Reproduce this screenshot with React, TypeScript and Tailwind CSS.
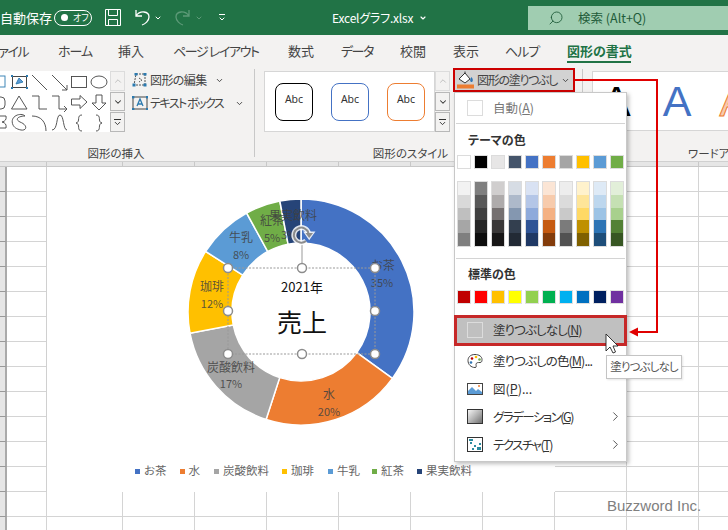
import { ChevronDown, ChevronRight, ChevronUp, Search } from "lucide-react";

const tabs = [
  { label: "ファイル", w: "w-[39px]", ml: "ml-[-11px]", track: "tracking-[-1.5px]" },
  { label: "ホーム", w: "w-[32px]", ml: "ml-[30px]", track: "tracking-[-1px]" },
  { label: "挿入", w: "w-[26px]", ml: "ml-[28px]", track: "" },
  { label: "ページ レイアウト", w: "w-[85px]", ml: "ml-[29px]", track: "tracking-[-1.4px]" },
  { label: "数式", w: "w-[26px]", ml: "ml-[30px]", track: "" },
  { label: "データ", w: "w-[32px]", ml: "ml-[27px]", track: "tracking-[-1.5px]" },
  { label: "校閲", w: "w-[26px]", ml: "ml-[27px]", track: "" },
  { label: "表示", w: "w-[26px]", ml: "ml-[27px]", track: "" },
  { label: "ヘルプ", w: "w-[34px]", ml: "ml-[26px]", track: "tracking-[-1px]" },
];

const themeTop = [
  "bg-[#ffffff]", "bg-[#000000]", "bg-[#e7e6e6]", "bg-[#44546a]", "bg-[#4472c4]",
  "bg-[#ed7d31]", "bg-[#a5a5a5]", "bg-[#ffc000]", "bg-[#5b9bd5]", "bg-[#70ad47]",
];

const themeShades = [
  ["bg-[#f2f2f2]", "bg-[#d9d9d9]", "bg-[#bfbfbf]", "bg-[#a6a6a6]", "bg-[#7f7f7f]"],
  ["bg-[#7f7f7f]", "bg-[#595959]", "bg-[#404040]", "bg-[#262626]", "bg-[#0d0d0d]"],
  ["bg-[#d0cece]", "bg-[#aeabab]", "bg-[#757070]", "bg-[#3a3838]", "bg-[#171616]"],
  ["bg-[#d6dce4]", "bg-[#adb9ca]", "bg-[#8497b0]", "bg-[#333f4f]", "bg-[#222a35]"],
  ["bg-[#d9e2f3]", "bg-[#b4c6e7]", "bg-[#8eaadb]", "bg-[#2f5496]", "bg-[#1f3864]"],
  ["bg-[#fbe5d5]", "bg-[#f7cbac]", "bg-[#f4b183]", "bg-[#c55a11]", "bg-[#833c0b]"],
  ["bg-[#ededed]", "bg-[#dbdbdb]", "bg-[#c9c9c9]", "bg-[#7b7b7b]", "bg-[#525252]"],
  ["bg-[#fff2cc]", "bg-[#fee599]", "bg-[#ffd965]", "bg-[#bf9000]", "bg-[#7f6000]"],
  ["bg-[#deeaf6]", "bg-[#bdd7ee]", "bg-[#9cc3e5]", "bg-[#2e75b5]", "bg-[#1e4e79]"],
  ["bg-[#e2efd9]", "bg-[#c5e0b3]", "bg-[#a8d08d]", "bg-[#538135]", "bg-[#375623]"],
];

const standard = [
  "bg-[#c00000]", "bg-[#ff0000]", "bg-[#ffc000]", "bg-[#ffff00]", "bg-[#92d050]",
  "bg-[#00b050]", "bg-[#00b0f0]", "bg-[#0070c0]", "bg-[#002060]", "bg-[#7030a0]",
];

const slices = [
  { name: "お茶", pct: 35, color: "#4472c4", dot: "bg-[#4472c4]", gap: "", lx: 383, ly: 264, px: 382, py: 282 },
  { name: "水", pct: 20, color: "#ed7d31", dot: "bg-[#ed7d31]", gap: "ml-[13px]", lx: 329, ly: 393, px: 329, py: 411 },
  { name: "炭酸飲料", pct: 17, color: "#a5a5a5", dot: "bg-[#a5a5a5]", gap: "ml-[14px]", lx: 231, ly: 366, px: 231, py: 383 },
  { name: "珈琲", pct: 12, color: "#ffc000", dot: "bg-[#ffc000]", gap: "ml-[13px]", lx: 212, ly: 285, px: 212, py: 303 },
  { name: "牛乳", pct: 8, color: "#5b9bd5", dot: "bg-[#5b9bd5]", gap: "ml-[14px]", lx: 241, ly: 236, px: 241, py: 254 },
  { name: "紅茶", pct: 5, color: "#70ad47", dot: "bg-[#70ad47]", gap: "ml-[12px]", lx: 272, ly: 219, px: 272, py: 237 },
  { name: "果実飲料", pct: 3, color: "#264478", dot: "bg-[#264478]", gap: "ml-[13px]", lx: 293, ly: 214, px: 289, py: 234 },
];

const CX = 301;
const CY = 312;

function slicePath(from: number, to: number) {
  const R = 113;
  const r = 69;
  const pt = (rad: number, pct: number) => {
    const a = (pct / 100) * Math.PI * 2;
    return `${(CX + rad * Math.sin(a)).toFixed(2)} ${(CY - rad * Math.cos(a)).toFixed(2)}`;
  };
  const large = to - from > 50 ? 1 : 0;
  return `M${pt(R, from)} A${R} ${R} 0 ${large} 1 ${pt(R, to)} L${pt(r, to)} A${r} ${r} 0 ${large} 0 ${pt(r, from)} Z`;
}

function Donut() {
  let acc = 0;
  const handles = [
    [228, 268], [302, 268], [375, 268],
    [228, 311], [375, 311],
    [228, 354], [302, 354], [375, 354],
  ];
  return (
    <svg width="508" height="295" viewBox="47 167 508 295" className="block">
      {slices.map((s) => {
        const d = slicePath(acc, acc + s.pct);
        acc += s.pct;
        return <path key={s.name} d={d} fill={s.color} stroke="#fff" strokeWidth="1.5" />;
      })}
      {slices.map((s) => (
        <g key={s.name} fill="#404040" fillOpacity="0.85" textAnchor="middle" dominantBaseline="central">
          <text x={s.lx} y={s.ly} fontSize="12">{s.name}</text>
          <text x={s.px} y={s.py} fontSize="11">{s.pct}%</text>
        </g>
      ))}
      <text x="302" y="286" fontSize="13" fill="#111" textAnchor="middle" dominantBaseline="central">2021年</text>
      <text x="302" y="321" fontSize="25" fill="#111" textAnchor="middle" dominantBaseline="central">売上</text>
      <rect x="228" y="268" width="147" height="86" fill="none" stroke="#999" strokeDasharray="2 1.5" />
      <line x1="302" y1="243" x2="302" y2="268" stroke="#999" />
      {handles.map(([x, y]) => (
        <circle key={`${x}-${y}`} cx={x} cy={y} r="4.5" fill="#fff" stroke="#8c8c8c" strokeWidth="1.5" />
      ))}
      <path d="M306 241 A7.5 7.5 0 1 1 308.5 233" stroke="#fff" strokeWidth="5" fill="none" opacity="0.85" />
      <path d="M305 232.5 H313.5 L309.2 238.5 Z" fill="#fff" stroke="#fff" strokeWidth="2" opacity="0.85" />
      <path d="M306 241 A7.5 7.5 0 1 1 308.5 233" stroke="#8c8c8c" strokeWidth="2" fill="none" />
      <path d="M305.5 233 H313 L309.2 238 Z" fill="#8c8c8c" />
    </svg>
  );
}

function ShapesGallery() {
  return (
    <svg width="110" height="61" viewBox="0 71 110 61" fill="none" stroke="#444" strokeWidth="0.9" className="block">
      <rect x="-8" y="76" width="13" height="11" stroke="#2b7ab0" />
      <rect x="12.5" y="76.5" width="14" height="11" stroke="#333" />
      <path d="M16 84 L19 78 L23 82 Z" fill="#5b9bd5" stroke="#2b7ab0" />
      {[[12, 76], [27, 76], [12, 88], [27, 88]].map(([x, y]) => (
        <rect key={`${x}${y}`} x={x - 1} y={y - 1} width="2" height="2" fill="#2b7ab0" stroke="none" />
      ))}
      <path d="M32 75 L47 90" />
      <path d="M52 75 L67 90 M67 85 V90 H62" />
      <rect x="71.5" y="76.5" width="15" height="11" />
      <ellipse cx="99" cy="82" rx="8" ry="6" />
      <rect x="-8" y="97" width="13" height="12" rx="4" />
      <path d="M19 96 L27 109 H11.5 Z" />
      <path d="M32 96 H39 V109 H47" />
      <path d="M52 96 H59 V109 H66 M64 106 L67 109 L64 112" />
      <path d="M71.5 99 H80 V95.5 L87 102 L80 108.5 V105 H71.5 Z" />
      <path d="M96 95 H102 V103 H106 L99 110 L92 103 H96 Z" />
      <path d="M-2 116 H6 Q7 121 2 122 Q7 123 6 128 H-2" />
      <path d="M13 125 C 9 116 21 112 25 116 C 19 116 14 119 20 122 C 28 125 27 131 21 130 C 16 129 14 127 13 125 Z" />
      <path d="M32 116 C 41 116 46 122 46 131" />
      <path d="M52 130 C 58 130 56 115 60 115 C 64 115 63 130 67 130" />
      <path d="M82 115 C 76 115 81 122 76 123 C 81 124 76 131 82 131" />
      <path d="M96 115 C 102 115 97 122 102 123 C 97 124 102 131 96 131" />
    </svg>
  );
}

function ScrollColumn() {
  return (
    <div className="flex w-[15px] flex-col gap-px">
      <div className="flex h-[20px] items-center justify-center border border-[#dcdcdc] bg-[#f3f2f1] text-[#b5b5b5]">
        <ChevronUp size={10} />
      </div>
      <div className="flex h-[19px] items-center justify-center border border-[#b8b8b8] bg-[#f3f2f1] text-[#333]">
        <ChevronDown size={10} strokeWidth={2.5} />
      </div>
      <div className="flex h-[20px] flex-col items-center justify-center border border-[#b8b8b8] bg-[#f3f2f1]">
        <div className="mb-px h-px w-[7px] bg-[#333]" />
        <ChevronDown size={9} strokeWidth={2.5} className="-my-[2px] text-[#333]" />
      </div>
    </div>
  );
}

function EditShapeIcon() {
  return (
    <svg width="16" height="14" viewBox="0 0 16 14" fill="none" className="shrink-0">
      <path d="M4 1 H13 V12 H2 Z M7 5 L10 7 L7 9" stroke="#555" strokeDasharray="2 1" />
      {[[4, 1], [13, 1], [13, 12], [2, 12]].map(([x, y]) => (
        <rect key={`${x}${y}`} x={x - 1.5} y={y - 1.5} width="3" height="3" fill="#2b7ab0" />
      ))}
    </svg>
  );
}

function TextBoxIcon() {
  return (
    <svg width="16" height="14" viewBox="0 0 16 14" fill="none" className="shrink-0">
      <rect x="1" y="1" width="14" height="12" stroke="#444" />
      <path d="M5 10 L8 3 L11 10 M6 8 H10" stroke="#2b7ab0" strokeWidth="1.3" />
      {[[1, 1], [15, 1], [1, 13], [15, 13]].map(([x, y]) => (
        <rect key={`${x}${y}`} x={x - 1} y={y - 1} width="2.4" height="2.4" fill="#2b7ab0" />
      ))}
    </svg>
  );
}

function AbcButton({ border }: { border: string }) {
  return (
    <div className={`flex h-[38px] w-[38px] items-center justify-center rounded-lg border bg-white pb-1 [font-family:'Noto_Sans',sans-serif] text-[10.5px] text-[#333] ${border}`}>
      Abc
    </div>
  );
}

function TitleBar() {
  return (
    <div className="flex h-[35px] items-center bg-[#217346] text-[13px] text-white">
      <span className="w-[47px] whitespace-nowrap">自動保存</span>
      <div className="ml-[7px] flex h-[16px] w-[38px] items-center rounded-full border border-white pl-[6px]">
        <div className="h-[7px] w-[7px] rounded-full bg-white" />
        <span className="ml-[5px] text-[9px] leading-none">オフ</span>
      </div>
      <svg width="16" height="17" viewBox="0 0 16 17" fill="none" stroke="#fff" className="ml-[13px]">
        <path d="M0.5 0.5 H15.5 V16.5 H0.5 Z M3.5 0.5 V6.5 H12.5 V0.5 M3.5 16.5 V10.5 H12.5 V16.5" />
      </svg>
      <svg width="15" height="17" viewBox="0 0 15 17" fill="none" stroke="#fff" strokeWidth="1.3" className="ml-[14px]">
        <path d="M1 1 V7 H7 M1 7 C 5 1 14 2 14 8 C 14 12 10 15 7 16" />
      </svg>
      <ChevronDown size={8} strokeWidth={3} className="ml-[4px]" />
      <svg width="15" height="17" viewBox="0 0 15 17" fill="none" stroke="#5d9a78" strokeWidth="1.3" className="ml-[13px]">
        <path d="M14 1 V7 H8 M14 7 C 10 1 1 2 1 8 C 1 12 5 15 8 16" />
      </svg>
      <ChevronDown size={8} strokeWidth={3} className="ml-[5px] text-[#5d9a78]" />
      <div className="ml-[15px] flex w-[7px] flex-col items-center">
        <div className="mb-px h-px w-[6px] bg-white" />
        <ChevronDown size={8} strokeWidth={3} className="-my-[1px]" />
      </div>
      <span className="ml-[107px] w-[82px] whitespace-nowrap text-[12px] tracking-[-0.2px]">Excelグラフ.xlsx</span>
      <ChevronDown size={8} strokeWidth={3.5} className="ml-[5px]" />
      <div className="ml-[101px] mt-[6px] flex h-[24px] flex-1 items-center self-start bg-[#a0cdb1] text-[#1f5c3a]">
        <Search size={16} strokeWidth={1.3} className="ml-[20px] -scale-x-100" />
        <span className="ml-[14px] whitespace-nowrap text-[12.5px]">検索 (Alt+Q)</span>
      </div>
    </div>
  );
}

function TabBar() {
  return (
    <div className="flex h-[34px] items-center overflow-hidden bg-[#f3f2f1] pb-[3px] text-[13px] text-[#444]">
      {tabs.map((t) => (
        <span key={t.label} className={`${t.w} ${t.ml} ${t.track} shrink-0 whitespace-nowrap`}>{t.label}</span>
      ))}
      <span className="relative ml-[28px] w-[64px] shrink-0 whitespace-nowrap font-bold text-[#217346]">
        図形の書式
        <span className="absolute left-0 right-0 top-[20px] h-[2px] bg-[#217346]" />
      </span>
    </div>
  );
}

function Ribbon() {
  return (
    <div className="flex h-[93px] border-b border-[#d0d0d0] bg-[#f3f2f1] text-[#444]">
      <div className="mb-[4px] flex w-[255px] flex-col border-r border-[#c8c8c8]">
        <div className="mt-[2px] flex h-[75px] shrink-0">
          <div className="flex h-[61px]">
            <div className="h-[61px] w-[110px] bg-white"><ShapesGallery /></div>
            <ScrollColumn />
          </div>
          <div className="-mt-[1px] ml-[7px] flex flex-col text-[12px]">
            <div className="flex h-[20px] items-center gap-[2px]">
              <EditShapeIcon />
              <span className="whitespace-nowrap tracking-[-0.6px]">図形の編集</span>
              <ChevronDown size={9} strokeWidth={2.5} className="ml-[6px]" />
            </div>
            <div className="mt-[3px] flex h-[20px] items-center gap-[2px]">
              <TextBoxIcon />
              <span className="whitespace-nowrap tracking-[-1.5px]">テキスト ボックス</span>
              <ChevronDown size={9} strokeWidth={2.5} className="ml-[10px]" />
            </div>
          </div>
        </div>
        <div className="shrink-0 pr-[22px] text-center text-[11.5px] leading-[14px]">図形の挿入</div>
      </div>

      <div className="mb-[4px] flex w-[328px] flex-col border-r border-[#c8c8c8]">
        <div className="mt-[2px] flex h-[75px] shrink-0">
          <div className="ml-[9px] flex h-[61px]">
            <div className="flex h-[61px] w-[171px] items-center gap-[18px] border border-[#d6d6d6] bg-white pl-[10px]">
              <AbcButton border="border-black" />
              <AbcButton border="border-[#4472c4]" />
              <AbcButton border="border-[#ed7d31]" />
            </div>
            <ScrollColumn />
          </div>
          <div className="-mt-[3px] ml-[3px] flex h-[24px] w-[122px] items-center border-2 border-[#cc0000] bg-[#d2d2d2] pl-[2px] text-[12px]">
            <svg width="17" height="18" viewBox="0 0 17 18" fill="none" className="shrink-0">
              <path d="M2 8 L8 2 L13 8 L8 12 Z" stroke="#333" fill="#fff" />
              <path d="M8 2 V0.5" stroke="#333" />
              <path d="M14.5 6 C 16.5 8.5 16 11 14.5 11 C 13 11 12.5 8.5 14.5 6 Z" fill="#2e75b5" />
              <rect x="0" y="13.5" width="17" height="4" fill="#ed7d31" />
            </svg>
            <span className="ml-[3px] whitespace-nowrap tracking-[-1.3px]">図形の塗りつぶし</span>
            <ChevronDown size={9} strokeWidth={2.5} className="ml-[4px]" />
          </div>
        </div>
        <div className="shrink-0 pr-[16px] text-center text-[11.5px] leading-[14px]">図形のスタイル</div>
      </div>

      <div className="ml-[9px] flex flex-1 flex-col overflow-hidden">
        <div className="mt-[2px] flex h-[75px] shrink-0">
          <div className="flex h-[60px] flex-1 items-center overflow-hidden whitespace-nowrap border border-r-0 border-[#d6d6d6] bg-white pl-[9px] [font-family:'Liberation_Sans',sans-serif] text-[43px] leading-none">
            <span className="text-black">A</span>
            <span className="ml-[32px] text-[#4472c4]">A</span>
            <span className="ml-[28px] text-[#f8cbad] [-webkit-text-stroke:1px_#ed7d31]">A</span>
          </div>
        </div>
        <div className="ml-[96px] shrink-0 whitespace-nowrap text-[11.5px] leading-[14px]">ワードアート</div>
      </div>
    </div>
  );
}

function Sheet() {
  const colW = ["w-[40px]", "w-[76px]", "w-[72px]", "w-[72px]", "w-[72px]", "w-[72px]", "w-[72px]", "w-[72px]", "w-[72px]", "w-[72px]", "w-[72px]"];
  return (
    <div className="overflow-hidden">
      <div className="flex h-[5px] border-b border-[#c8c8c8] bg-[#e6e6e6] pl-[7px]">
        {colW.map((w, i) => <div key={i} className={`${w} shrink-0 border-r border-[#c8c8c8]`} />)}
      </div>
      {Array.from({ length: 15 }).map((_, r) => (
        <div key={r} className="flex h-[25px]">
          <div className="w-[7px] shrink-0 border-b border-r-2 border-b-[#999] border-r-[#aaa] bg-[#e6e6e6]" />
          {colW.map((w, i) => <div key={i} className={`${w} shrink-0 border-b border-r border-[#d4d4d4] bg-white`} />)}
        </div>
      ))}
    </div>
  );
}

function ChartCard() {
  return (
    <div className="absolute left-[46px] top-[167px] h-[325px] w-[509px] border-l border-[#d0d0d0] bg-white">
      <Donut />
      <div className="flex h-[18px] items-center pl-[88px] text-[11.5px] text-[#666]">
        {slices.map((s) => (
          <div key={s.name} className={`flex items-center gap-[4px] ${s.gap}`}>
            <span className={`h-[5px] w-[5px] ${s.dot}`} />
            <span className="whitespace-nowrap">{s.name}</span>
          </div>
        ))}
      </div>
    </div>
  );
}

function MenuRow({ icon, label, arrow, track }: { icon: React.ReactNode; label: React.ReactNode; arrow?: boolean; track: string }) {
  return (
    <div className="flex h-[28px] items-center pl-[12px] text-[12.5px] text-[#333]">
      <div className="flex w-[16px] justify-center">{icon}</div>
      <span className={`ml-[10px] whitespace-nowrap ${track}`}>{label}</span>
      {arrow && <ChevronRight size={15} strokeWidth={1.3} className="ml-auto mr-[3px]" />}
    </div>
  );
}

function Dropdown() {
  return (
    <div className="absolute left-[454px] top-[92px] h-[370px] w-[173px] border border-[#c8c8c8] bg-white shadow-[2px_2px_4px_rgba(0,0,0,0.25)]">
      <div className="flex h-[30px] items-center pl-[12px] text-[12.5px] text-[#777]">
        <div className="h-[16px] w-[16px] border border-[#dcdcdc] bg-white" />
        <span className="ml-[10px]">自動(<span className="underline">A</span>)</span>
      </div>
      <div className="mx-[1px] h-px bg-[#d4d4d4]" />
      <div className="flex h-[31px] items-center pl-[13px] text-[12px] font-bold text-[#333]">テーマの色</div>
      <div className="flex gap-[3px] pl-[2px]">
        {themeTop.map((c) => <div key={c} className={`h-[14px] w-[14px] border border-[#dcdcdc] ${c}`} />)}
      </div>
      <div className="mt-[12px] flex gap-[3px] pl-[2px]">
        {themeShades.map((col, i) => (
          <div key={i} className="flex w-[14px] flex-col border border-[#dcdcdc]">
            {col.map((c) => <div key={c} className={`h-[12.8px] ${c}`} />)}
          </div>
        ))}
      </div>
      <div className="mx-[1px] mt-[11px] h-px bg-[#d4d4d4]" />
      <div className="flex h-[31px] items-center pl-[13px] text-[12px] font-bold text-[#333]">標準の色</div>
      <div className="flex gap-[3px] pl-[2px]">
        {standard.map((c) => <div key={c} className={`h-[14px] w-[14px] border border-[#e0e0e0] ${c}`} />)}
      </div>
      <div className="-mx-[1px] mb-[1px] mt-[11px] flex h-[31px] items-center border-[3px] border-[#c62828] bg-[#c0c0c0] pl-[10px] text-[12.5px] text-[#333]">
        <div className="h-[16px] w-[16px] border border-[#dcdcdc]" />
        <span className="ml-[10px] tracking-[-0.9px]">塗りつぶしなし(<span className="underline">N</span>)</span>
      </div>
      <MenuRow
        track="tracking-[-0.9px]"
        label={<>塗りつぶしの色(<span className="underline">M</span>)...</>}
        icon={
          <svg width="17" height="16" viewBox="0 0 16 15" fill="none">
            <path d="M8 1 C 3 1 1 4 1 7 C 1 11 4 14 8 14 C 10 14 9 12 9 11 C 9 9 11 9 13 9 C 15 9 15 7 15 6 C 15 3 12 1 8 1 Z" stroke="#444" fill="#fff" />
            <circle cx="5" cy="5" r="1.3" fill="#c00000" />
            <circle cx="9" cy="3.5" r="1.3" fill="#ffc000" />
            <circle cx="12.5" cy="6" r="1.3" fill="#70ad47" />
            <circle cx="4" cy="9" r="1.3" fill="#2e75b5" />
          </svg>
        }
      />
      <MenuRow
        track=""
        label={<>図(<span className="underline">P</span>)...</>}
        icon={
          <svg width="16" height="12" viewBox="0 0 16 12">
            <rect x="0.5" y="0.5" width="15" height="11" fill="#fff" stroke="#444" />
            <path d="M1 11 V8 L5 4 L9 8 L11 6 L15 9 V11 Z" fill="#5b9bd5" />
            <circle cx="12" cy="3" r="1" fill="#ed7d31" />
          </svg>
        }
      />
      <MenuRow
        arrow
        track="tracking-[-1.5px]"
        label={<>グラデーション(<span className="underline">G</span>)</>}
        icon={<div className="h-[15px] w-[16px] border border-[#333] bg-[linear-gradient(135deg,#f5f5f5,#b5b5b5_50%,#6f6f6f)]" />}
      />
      <MenuRow
        arrow
        track="tracking-[-1.5px]"
        label={<>テクスチャ(<span className="underline">T</span>)</>}
        icon={
          <svg width="16" height="15" viewBox="0 0 16 15">
            <rect x="0.5" y="0.5" width="15" height="14" fill="#fff" stroke="#333" />
            <path d="M2 2 H6 V4 H2 Z M3 5 H5 V7 H3 Z M7 8 H9 V10 H7 Z M10 10 H14 V13 H10 Z M5 11 H7 V13 H5 Z M12 6 H14 V8 H12 Z" fill="#2b8a9e" />
          </svg>
        }
      />
    </div>
  );
}

function Annotation() {
  return (
    <svg width="728" height="530" viewBox="0 0 728 530" fill="none" className="pointer-events-none absolute left-0 top-0">
      <path d="M575 80 H657 V332 H636" stroke="#e00000" strokeWidth="2" />
      <path d="M629 332 L638 327.5 V336.5 Z" fill="#e00000" />
      <path d="M606 334 V351 L610 347 L613 353 L615.5 352 L613 346 L618 346 Z" fill="#fff" stroke="#222" strokeWidth="0.9" />
    </svg>
  );
}

export default function App() {
  return (
    <div className="relative h-[530px] w-[728px] overflow-hidden bg-white [font-family:'Noto_Sans_CJK_JP','Noto_Sans',sans-serif] [font-feature-settings:'palt']">
      <TitleBar />
      <TabBar />
      <Ribbon />
      <Sheet />
      <ChartCard />
      <div className="absolute bottom-[13px] left-[607px] whitespace-nowrap [font-family:'Liberation_Sans',sans-serif] text-[15px] text-[#808080]">
        Buzzword Inc.
      </div>
      <Dropdown />
      <Annotation />
      <div className="absolute left-[606px] top-[355px] flex h-[24px] w-[76px] items-center justify-center border border-[#c4c4c4] bg-white text-[11.5px] tracking-[-0.9px] text-[#555] shadow-[1px_1px_2px_rgba(0,0,0,0.1)]">
        塗りつぶしなし
      </div>
    </div>
  );
}
